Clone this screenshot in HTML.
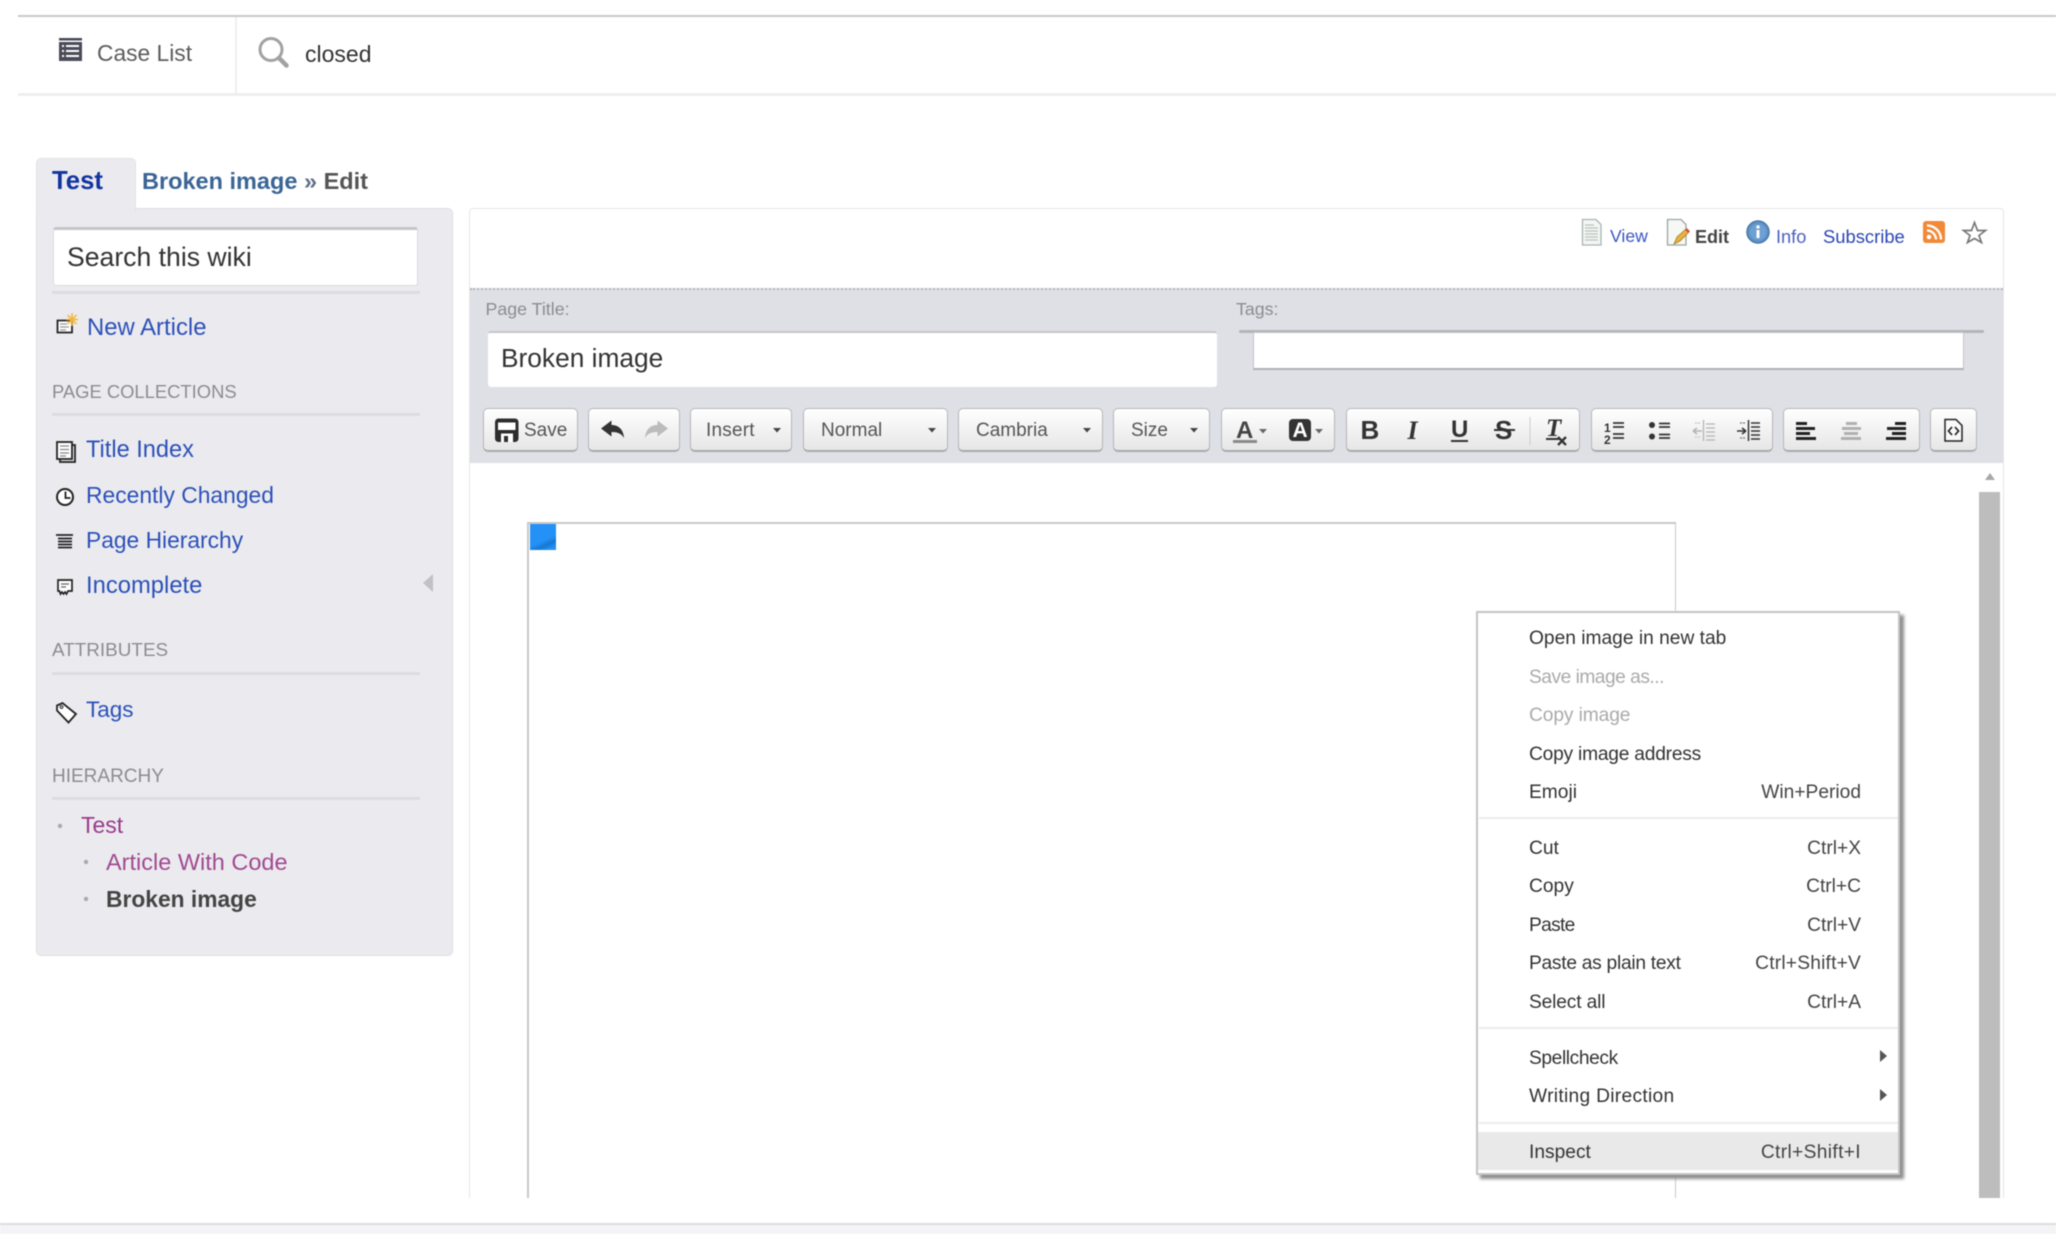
<!DOCTYPE html>
<html>
<head>
<meta charset="utf-8">
<title>Broken image Edit</title>
<style>
html,body{margin:0;padding:0;background:#fff}
#p{position:relative;width:2056px;height:1234px;overflow:hidden;background:#fff;font-family:"Liberation Sans",sans-serif;filter:blur(.45px)}
.b{position:absolute;box-sizing:border-box}
.t{position:absolute;white-space:nowrap;line-height:1}
.l{color:#2c50b8;font-size:23px}
.h{color:#8b8b92;font-size:18.4px}
.v{color:#9a3a8c;font-size:23px}
.hr{position:absolute;left:52px;width:368px;height:3px;background:#dcdce2}
.btn{position:absolute;box-sizing:border-box;top:408px;height:44px;border:1px solid #b6b6b8;border-bottom:2px solid #aaaaac;border-radius:5px;background:linear-gradient(#fff,#e6e6e6)}
.tb{color:#555;font-size:19px;top:421px}
.m{color:#333;font-size:19.2px;left:1529px}
.m.d{color:#aaa}
.s{color:#444;font-size:19.2px;right:195px}
.sep{position:absolute;left:1479px;width:419px;height:2px;background:#ececec}
</style>
</head>
<body>
<div id="p">
<!-- top nav -->
<div class="b" style="left:18px;top:15px;width:2038px;height:2px;background:#c8c8c8"></div>
<div class="b" style="left:18px;top:93px;width:2038px;height:3px;background:#eee"></div>
<div class="b" style="left:235px;top:17px;width:2px;height:76px;background:#eee"></div>
<span class="t" style="left:97px;top:41.500px;font-size:22.800px;color:#5c5c5c">Case List</span>
<span class="t" style="left:305px;top:43px;font-size:23px;color:#333">closed</span>

<!-- sidebar -->
<div class="b" style="left:36px;top:158px;width:100px;height:54px;background:#ebebef;border:1px solid #e2e2e6;border-bottom:0;border-radius:5px 5px 0 0;z-index:2"></div>
<div class="b" style="left:36px;top:208px;width:417px;height:748px;background:#ebebef;border:1px solid #e0e0e4;border-radius:0 5px 5px 5px"></div>
<span class="t" style="left:52px;top:168.500px;font-size:25.700px;font-weight:bold;color:#12349f;z-index:3">Test</span>
<span class="t" style="left:142px;top:169.500px;font-size:23.500px;font-weight:bold;color:#3a6596">Broken image <span style="color:#5f6f85">»</span> <span style="color:#555">Edit</span></span>
<div class="b" style="left:53px;top:227px;width:365px;height:59px;background:#fff;border:1px solid #dadade;border-top:3px solid #c4c4ca;border-radius:3px"></div>
<span class="t" style="left:67px;top:243.500px;font-size:26.600px;color:#333">Search this wiki</span>
<div class="hr" style="top:291px"></div>
<span class="t" style="left:87px;top:316px;font-size:23.900px;color:#2c50b8">New Article</span>
<span class="t h" style="left:52px;top:382.500px">PAGE COLLECTIONS</span>
<div class="hr" style="top:413px"></div>
<span class="t l" style="left:86px;top:438.500px;font-size:23.600px">Title Index</span>
<span class="t l" style="left:86px;top:484px;font-size:22.850px">Recently Changed</span>
<span class="t l" style="left:86px;top:529px;font-size:22.800px">Page Hierarchy</span>
<span class="t l" style="left:86px;top:573.500px;font-size:23.800px">Incomplete</span>
<span class="t h" style="left:52px;top:641.500px;font-size:18.900px">ATTRIBUTES</span>
<div class="hr" style="top:672px"></div>
<span class="t l" style="left:86px;top:699px;font-size:22.500px">Tags</span>
<span class="t h" style="left:52px;top:766.500px;font-size:19px">HIERARCHY</span>
<div class="hr" style="top:797px"></div>
<span class="t v" style="left:81px;top:813.500px">Test</span>
<span class="t v" style="left:106px;top:850.500px;color:#a04a90;font-size:23.500px">Article With Code</span>
<span class="t" style="left:106px;top:887.500px;font-size:22.800px;font-weight:bold;color:#444">Broken image</span>

<!-- main panel -->
<div class="b" style="left:469px;top:208px;width:1535px;height:990px;border:1px solid #e6e6ea;border-bottom:0;border-radius:4px 4px 0 0;background:#fff"></div>
<div class="b" style="left:470px;top:288px;width:1533px;height:175px;background:#dfe0e6;border-top:2px dotted #b5b5ba"></div>
<span class="t" style="left:1610px;top:228px;font-size:17.600px;color:#3a55c0">View</span>
<span class="t" style="left:1695px;top:228px;font-size:18px;font-weight:bold;color:#444">Edit</span>
<span class="t" style="left:1776px;top:228px;font-size:18.200px;color:#4a5fc0">Info</span>
<span class="t" style="left:1823px;top:228px;font-size:18.400px;color:#2c45b5">Subscribe</span>
<span class="t" style="left:485.500px;top:300.500px;font-size:17.800px;color:#8b8b92">Page Title:</span>
<span class="t" style="left:1236px;top:300.500px;font-size:17.800px;color:#8b8b92">Tags:</span>
<div class="b" style="left:488px;top:331px;width:729px;height:56px;background:#fff;border-top:2px solid #c6c6cc;border-radius:3px"></div>
<span class="t" style="left:501px;top:345px;font-size:26.300px;color:#333">Broken image</span>
<div class="b" style="left:1239px;top:330px;width:745px;height:3px;background:#b3b4bb;border-radius:2px"></div>
<div class="b" style="left:1253px;top:332px;width:711px;height:38px;background:#fff;border:1px solid #c4c4c8;border-bottom:2px solid #b0b0b4"></div>

<!-- toolbar -->
<div class="btn" style="left:483px;width:95px"></div>
<div class="btn" style="left:588px;width:92px"></div>
<div class="btn" style="left:690px;width:102px"></div>
<div class="btn" style="left:803px;width:145px"></div>
<div class="btn" style="left:958px;width:145px"></div>
<div class="btn" style="left:1113px;width:97px"></div>
<div class="btn" style="left:1221px;width:114px"></div>
<div class="btn" style="left:1346px;width:234px"></div>
<div class="btn" style="left:1591px;width:182px"></div>
<div class="btn" style="left:1783px;width:137px"></div>
<div class="btn" style="left:1930px;width:47px"></div>
<span class="t tb" style="left:524px">Save</span>
<span class="t tb" style="left:706px;letter-spacing:.2px">Insert</span>
<span class="t tb" style="left:821px">Normal</span>
<span class="t tb" style="left:976px">Cambria</span>
<span class="t tb" style="left:1131px">Size</span>

<!-- editor -->
<div class="b" style="left:1979px;top:492px;width:21px;height:706px;background:#bdbdbd"></div>
<div class="b" style="left:527px;top:522px;width:1149px;height:676px;border:2px solid #c8c8c8;border-bottom:0;border-width:2px 1px 0 2px"></div>
<div class="b" style="left:530px;top:524px;width:26px;height:26px;background:linear-gradient(155deg,#2491f7 60%,#1878d0 75%,#2491f7 90%)"></div>

<!-- bottom -->
<div class="b" style="left:0;top:1223px;width:2056px;height:11px;background:#f4f4f6;border-top:2px solid #dcdcdf"></div>

<!-- icons -->
<svg class="b" style="left:0;top:0" width="2056" height="1234" viewBox="0 0 2056 1234" xmlns="http://www.w3.org/2000/svg">
<!-- case list -->
<rect x="59" y="38" width="23" height="2.500" fill="#4a4a58"/>
<rect x="59" y="42" width="23" height="19" fill="#4a4a58"/>
<g fill="#fff"><rect x="62" y="45" width="2" height="2"/><rect x="66" y="45" width="13" height="2"/><rect x="62" y="50" width="2" height="2"/><rect x="66" y="50" width="13" height="2"/><rect x="62" y="55" width="2" height="2"/><rect x="66" y="55" width="13" height="2"/></g>
<!-- search -->
<circle cx="271" cy="49.500" r="11" fill="none" stroke="#a2a2a2" stroke-width="3"/>
<path d="M279 58L286.500 65.500" stroke="#a2a2a2" stroke-width="4.500" stroke-linecap="round"/>
<!-- new article -->
<path d="M57.500 320.500H72V332.500H57.500Z" fill="#fff" stroke="#222" stroke-width="1.800"/>
<path d="M60 324h7M60 327h9M60 330h6" stroke="#999" stroke-width="1.200"/>
<path d="M72 313v13M66 319.500h12M67.500 315l9 9M76.500 315l-9 9" stroke="#f2b632" stroke-width="1.500"/>
<!-- title index -->
<rect x="60" y="445" width="15" height="17" fill="#ebebef" stroke="#222" stroke-width="1.800"/>
<rect x="57" y="442" width="15" height="17" fill="#fff" stroke="#222" stroke-width="1.800"/>
<path d="M60 446h9M60 449.500h9M60 453h9M60 456h6" stroke="#888" stroke-width="1.300"/>
<!-- clock -->
<circle cx="65" cy="497" r="8" fill="#fff" stroke="#222" stroke-width="2"/>
<path d="M65.500 491.500V498H70.500" fill="none" stroke="#222" stroke-width="1.800"/>
<!-- hierarchy -->
<path d="M56 535h17M58 538.500h14M58 541.500h14M58 544.500h14M58 547.500h14" stroke="#222" stroke-width="1.700"/>
<!-- incomplete -->
<path d="M58 580H72V591H68L66.500 594L65 592L63.500 594L62 592L60.500 594L59.500 591H58Z" fill="#fff" stroke="#222" stroke-width="1.700"/>
<path d="M61 584h8M61 587h5" stroke="#666" stroke-width="1.200"/>
<!-- tag -->
<path d="M57 705.500L62.500 703L76 714L68.500 722.500L57 710.500Z" fill="#fff" stroke="#222" stroke-width="1.800"/>
<circle cx="61.500" cy="707" r="1.400" fill="none" stroke="#222" stroke-width="1"/>
<!-- bullets -->
<g fill="#a9a9ae"><circle cx="60" cy="826" r="2.200"/><circle cx="86" cy="862" r="2.200"/><circle cx="86" cy="899" r="2.200"/></g>
<!-- collapse -->
<path d="M433 574V592L423 583Z" fill="#c2c2c6"/>
<!-- view doc -->
<path d="M1582.500 219.500H1596L1601 224.500V245H1582.500Z" fill="#f4f7f4" stroke="#a8b4b0" stroke-width="1.300"/>
<path d="M1585 225h9M1585 228h13M1585 231h13M1585 234h13M1585 237h13M1585 240h13" stroke="#b8c2bc" stroke-width="1.200"/>
<!-- edit doc -->
<path d="M1667.500 219.500H1681L1686 224.500V245H1667.500Z" fill="#f6f8f6" stroke="#9ca4a0" stroke-width="1.300"/>
<path d="M1674 244L1677 237L1686 229L1689 232L1680 241Z" fill="#e8b23c" stroke="#a87a20" stroke-width=".8"/>
<path d="M1686 229L1689 232" stroke="#d84a3a" stroke-width="2.500"/>
<!-- info -->
<circle cx="1758" cy="232" r="11" fill="#5f93c8" stroke="#4a78a8" stroke-width="1.500"/>
<circle cx="1758" cy="232" r="8" fill="#6fa0d2"/>
<rect x="1756.500" y="230" width="3" height="8" fill="#fff"/><rect x="1756.500" y="225.500" width="3" height="3" fill="#fff"/>
<!-- rss -->
<rect x="1923" y="221" width="22" height="22" rx="3" fill="#f08a38"/>
<circle cx="1929" cy="237" r="2.300" fill="#fff"/>
<path d="M1927 230.500a9 9 0 0 1 9 9M1927 225.500a14 14 0 0 1 14 14" fill="none" stroke="#fff" stroke-width="2.300"/>
<!-- star -->
<path d="M1974.500 222.500L1977.500 230.500H1985.500L1979 235.500L1981.500 242.500L1974.500 238.500L1967.500 242.500L1970 235.500L1963.500 230.500H1971.500Z" fill="none" stroke="#777" stroke-width="1.700"/>
<!-- save -->
<rect x="495" y="418.500" width="23.500" height="23.500" rx="3.500" fill="#2d2d2d"/>
<rect x="498" y="422.500" width="17.500" height="7.500" fill="#fff"/>
<rect x="501" y="433.500" width="12" height="8.500" fill="#fff"/>
<rect x="504" y="436" width="4" height="6" fill="#2d2d2d"/>
<!-- undo redo -->
<path d="M601 428.500L611.500 420.500V425C619 425 623.500 430 624 438C621.500 433.500 617.500 432 611.500 432V436.500Z" fill="#333"/>
<path d="M668 428.500L657.500 420.500V425C650 425 645.500 430 645 438C647.500 433.500 651.500 432 657.500 432V436.500Z" fill="#bcbcbc"/>
<!-- carets -->
<g fill="#444"><path d="M773 428h8l-4 4.500z"/><path d="M928 428h8l-4 4.500z"/><path d="M1083 428h8l-4 4.500z"/><path d="M1190 428h8l-4 4.500z"/></g>
<g fill="#666"><path d="M1259 429h8l-4 4.500z"/><path d="M1315 429h8l-4 4.500z"/></g>
<!-- text colour -->
<text x="1236" y="438" font-family="Liberation Sans" font-size="24" font-weight="bold" fill="#444">A</text>
<rect x="1233" y="440" width="24" height="3" fill="#8a8a8a"/>
<rect x="1289" y="419" width="22" height="22" rx="4" fill="#333"/>
<text x="1292.500" y="437" font-family="Liberation Sans" font-size="21" font-weight="bold" fill="#fff">A</text>
<!-- b i u s -->
<text x="1360.500" y="439" font-family="Liberation Sans" font-size="26" font-weight="bold" fill="#333">B</text>
<text x="1407.500" y="439" font-family="Liberation Serif" font-size="26" font-weight="bold" font-style="italic" fill="#333">I</text>
<text x="1451" y="437" font-family="Liberation Sans" font-size="24" font-weight="bold" fill="#333">U</text>
<rect x="1451" y="440" width="17" height="2" fill="#333"/>
<text x="1495" y="439" font-family="Liberation Sans" font-size="26" font-weight="bold" fill="#333">S</text>
<rect x="1494" y="429" width="21" height="2" fill="#333"/>
<rect x="1529.500" y="417" width="1" height="28" fill="#ccc"/>
<text x="1546" y="436" font-family="Liberation Serif" font-size="25" font-weight="bold" font-style="italic" fill="#333">T</text>
<rect x="1546" y="438" width="13" height="2" fill="#333"/>
<path d="M1558 437L1566 445M1566 437L1558 445" stroke="#333" stroke-width="2.300"/>
<!-- ordered list -->
<text x="1604" y="432" font-family="Liberation Sans" font-size="12" font-weight="bold" fill="#333">1</text>
<text x="1604" y="444" font-family="Liberation Sans" font-size="12" font-weight="bold" fill="#333">2</text>
<path d="M1613 423h11M1613 427h11M1613 434h11M1613 438h11" stroke="#333" stroke-width="1.800"/>
<!-- bullet list -->
<circle cx="1652" cy="425" r="3" fill="#333"/><circle cx="1652" cy="436.500" r="3" fill="#333"/>
<path d="M1659 423.500h11M1659 427h11M1659 434.500h11M1659 438h11" stroke="#333" stroke-width="1.800"/>
<!-- outdent -->
<path d="M1703.500 420V441M1706 424h9M1706 428h9M1706 432h9M1706 436h9M1706 440h9" stroke="#b4b4b4" stroke-width="1.300"/>
<path d="M1693 431h9M1693 431l4-3M1693 431l4 3" stroke="#b4b4b4" stroke-width="1.500" fill="none"/>
<path d="M1695 423h5M1695 437h5" stroke="#c4c4c4" stroke-width="1.300" stroke-dasharray="2 1"/>
<!-- indent -->
<path d="M1748.500 420V441" stroke="#333" stroke-width="1.500"/>
<path d="M1751 423h9M1751 427h9M1751 431h9M1751 435h9M1751 439h9" stroke="#333" stroke-width="1.400"/>
<path d="M1737 431h9M1746 431l-4-3M1746 431l-4 3" stroke="#333" stroke-width="1.500" fill="none"/>
<path d="M1740 423h5M1740 438h5" stroke="#777" stroke-width="1.300" stroke-dasharray="2 1"/>
<!-- aligns -->
<g fill="#222"><rect x="1796" y="422" width="11" height="3"/><rect x="1796" y="427" width="19" height="3"/><rect x="1796" y="432" width="14" height="3"/><rect x="1796" y="437" width="20" height="3"/></g>
<g fill="#b0b0b0"><rect x="1846" y="422" width="11" height="3"/><rect x="1842" y="427" width="19" height="3"/><rect x="1844" y="432" width="14" height="3"/><rect x="1841" y="437" width="20" height="3"/></g>
<g fill="#222"><rect x="1895" y="422" width="11" height="3"/><rect x="1887" y="427" width="19" height="3"/><rect x="1892" y="432" width="14" height="3"/><rect x="1886" y="437" width="20" height="3"/></g>
<!-- source -->
<path d="M1945 419.500H1956L1962 425.500V441H1945Z" fill="#f8f8f8" stroke="#222" stroke-width="1.500"/>
<path d="M1952 427L1948.500 431L1952 435M1955 427L1958.500 431L1955 435" fill="none" stroke="#222" stroke-width="1.700"/>
<!-- scroll arrow -->
<path d="M1990 473L1995 480H1985Z" fill="#a8a8a8"/>
</svg>

<!-- context menu -->
<div class="b" style="left:1476px;top:611px;width:424px;height:564px;background:#fff;border:2px solid #c4c4c4;box-shadow:4px 4px 3px #8e8e8e"></div>
<div class="b" style="left:1478px;top:1132px;width:420px;height:38px;background:#e9e9e9"></div>
<span class="t m" style="top:629px">Open image in new tab</span>
<span class="t m d" style="top:668px;letter-spacing:-.5px">Save image as...</span>
<span class="t m d" style="top:706px;letter-spacing:-.1px">Copy image</span>
<span class="t m" style="top:745px;letter-spacing:-.22px">Copy image address</span>
<span class="t m" style="top:783px">Emoji</span>
<span class="t s" style="top:783px">Win+Period</span>
<div class="sep" style="top:817px"></div>
<span class="t m" style="top:839px">Cut</span>
<span class="t s" style="top:839px">Ctrl+X</span>
<span class="t m" style="top:877px">Copy</span>
<span class="t s" style="top:877px">Ctrl+C</span>
<span class="t m" style="top:915.500px;letter-spacing:-.7px">Paste</span>
<span class="t s" style="top:915.500px">Ctrl+V</span>
<span class="t m" style="top:954px;letter-spacing:-.27px">Paste as plain text</span>
<span class="t s" style="top:954px;letter-spacing:.2px">Ctrl+Shift+V</span>
<span class="t m" style="top:992.500px;letter-spacing:-.15px">Select all</span>
<span class="t s" style="top:992.500px">Ctrl+A</span>
<div class="sep" style="top:1027px"></div>
<span class="t m" style="top:1049px;letter-spacing:-.4px">Spellcheck</span>
<span class="t m" style="top:1087px;letter-spacing:.3px">Writing Direction</span>
<div class="sep" style="top:1122px"></div>
<span class="t m" style="top:1143px">Inspect</span>
<span class="t s" style="top:1143px;letter-spacing:.35px">Ctrl+Shift+I</span>
<svg class="b" style="left:1876px;top:1045px" width="14" height="60" viewBox="0 0 14 60" xmlns="http://www.w3.org/2000/svg">
<path d="M4 5L11 11L4 17Z" fill="#555"/><path d="M4 44L11 50L4 56Z" fill="#555"/>
</svg>
</div>
</body>
</html>
